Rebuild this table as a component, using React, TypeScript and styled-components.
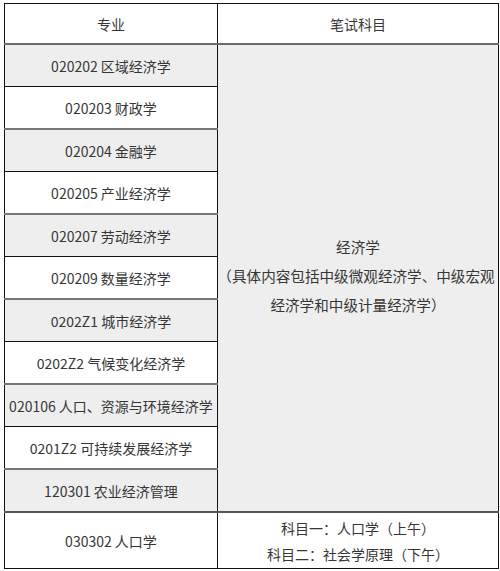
import React from 'react';
import styled, { createGlobalStyle } from 'styled-components';

const GlobalStyle = createGlobalStyle`
  html, body {
    margin: 0;
    padding: 0;
    background: #ffffff;
  }
  body {
    font-family: "Noto Sans CJK SC", "DejaVu Sans", sans-serif;
  }
`;

const Page = styled.div`
  width: 500px;
  height: 571px;
  padding: 3px 0 0 4px;
  box-sizing: border-box;
  background: #ffffff;
`;

const Table = styled.table`
  width: 494px;
  border-collapse: collapse;
  table-layout: fixed;
  color: #363636;
  font-size: 14px;
  border: 1.5px solid #111111;
`;

const HeadCell = styled.th`
  height: 39px;
  padding: 0;
  font-weight: 400;
  text-align: center;
  background: #ffffff;
  border-left: 1.5px solid #111111;
  border-right: 1.5px solid #111111;
  border-bottom: 2px solid #6a6a6a;
`;

const Cell = styled.td<{ $shade?: boolean; $grayTop?: boolean }>`
  height: 41px;
  padding: 0;
  text-align: center;
  white-space: nowrap;
  background: ${p => (p.$shade ? '#eeeeee' : '#ffffff')};
  border-left: 1.5px solid #111111;
  border-right: 1.5px solid #111111;
  border-top: ${p => (p.$grayTop ? '2px solid #777777' : '1px solid #111111')};
`;

const MergedCell = styled.td`
  padding: 0 0 6px;
  text-align: center;
  vertical-align: middle;
  background: #eeeeee;
  border-left: 1.5px solid #111111;
  border-right: 1.5px solid #111111;
  font-size: 14.6px;
  line-height: 29px;
  white-space: nowrap;
  overflow: visible;
`;

const LastCell = styled.td`
  height: 55px;
  padding: 0;
  text-align: center;
  background: #ffffff;
  border-left: 1.5px solid #111111;
  border-right: 1.5px solid #111111;
  border-top: 2px solid #555555;
  line-height: 26px;
`;

const Wide = styled.div`
  margin: 0 -8px 0 -12px;
`;

const majors = [
  '020202 区域经济学',
  '020203 财政学',
  '020204 金融学',
  '020205 产业经济学',
  '020207 劳动经济学',
  '020209 数量经济学',
  '0202Z1 城市经济学',
  '0202Z2 气候变化经济学',
  '020106 人口、资源与环境经济学',
  '0201Z2 可持续发展经济学',
  '120301 农业经济管理',
];

export default function App() {
  return (
    <Page>
      <GlobalStyle />
      <Table>
        <colgroup>
          <col style={{ width: '213px' }} />
          <col style={{ width: '281px' }} />
        </colgroup>
        <thead>
          <tr>
            <HeadCell>专业</HeadCell>
            <HeadCell>笔试科目</HeadCell>
          </tr>
        </thead>
        <tbody>
          {majors.map((m, i) => (
            <tr key={m}>
              <Cell $shade={i % 2 === 0} $grayTop={i % 2 === 0 && i > 0}>
                {m}
              </Cell>
              {i === 0 && (
                <MergedCell rowSpan={majors.length}>
                  <div>经济学</div>
                  <Wide>（具体内容包括中级微观经济学、中级宏观</Wide>
                  <div>经济学和中级计量经济学）</div>
                </MergedCell>
              )}
            </tr>
          ))}
          <tr>
            <LastCell>030302 人口学</LastCell>
            <LastCell>
              <div>科目一：人口学（上午）</div>
              <div>科目二：社会学原理（下午）</div>
            </LastCell>
          </tr>
        </tbody>
      </Table>
    </Page>
  );
}
